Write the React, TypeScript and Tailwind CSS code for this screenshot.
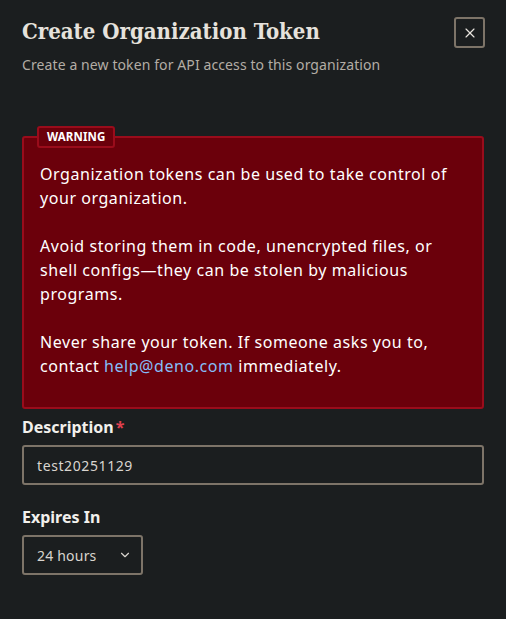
import { X, ChevronDown } from 'lucide-react';

export default function App() {
  return (
    <div className="min-h-screen w-full bg-[#1b1e1f] px-[22px] pt-[17px] text-[#f2f0ec] font-['Noto_Sans',sans-serif]">
      <div className="flex items-start justify-between">
        <div>
          <h1 className="font-['DejaVu_Serif_Condensed','DejaVu_Serif',serif] text-[22px] font-bold leading-[28px] text-[#e6e2dc]">
            Create Organization Token
          </h1>
          <p className="mt-[10px] text-[14px] leading-[20px] tracking-[0.1px] text-[#b3ada5]">
            Create a new token for API access to this organization
          </p>
        </div>
        <button className="mr-[-1px] flex h-[31px] w-[31px] items-center justify-center rounded-[3px] border-2 border-[#7d7468] text-[#e8e4de]">
          <X size={16} strokeWidth={1.75} />
        </button>
      </div>

      {/* Warnung */}
      <div className="relative mt-[61px] rounded-[3px] border-2 border-[#9a0c1b] bg-[#6b000b] px-[16px] pt-[24px] pb-[29px] text-[16px] leading-[24px] tracking-[0.55px] text-white">
        <span className="absolute left-[13px] top-[-12px] rounded-[3px] border-2 border-[#9a0c1b] bg-[#6b000b] px-[8px] text-[11.5px] font-bold leading-[18px] tracking-[0.1px]">
          WARNING
        </span>
        <p>Organization tokens can be used to take control of your organization.</p>
        <p className="mt-[24px]">
          Avoid storing them in code, unencrypted files, or shell configs—they can be stolen by malicious
          programs.
        </p>
        <p className="mt-[24px]">
          Never share your token. If someone asks you to, contact <a className="text-[#86bdf7]">help@deno.com</a>{' '}
          immediately.
        </p>
      </div>

      <label className="mt-[6px] flex text-[16px] font-bold leading-[24px] text-[#f2f0ec]">
        Description<span className="ml-[2px] text-[#e0404f]">*</span>
      </label>
      <div className="mt-[6px] flex h-[40px] items-center rounded-[3px] border-2 border-[#7d7468] px-[13px] text-[14px] tracking-[0.6px] text-[#d9d5cf]">
        test20251129
      </div>

      <label className="mt-[20px] block text-[16px] font-bold leading-[24px] text-[#f2f0ec]">Expires In</label>
      <div className="mt-[6px] flex h-[40px] w-[121px] items-center justify-between rounded-[3px] border-2 border-[#7d7468] pl-[13px] pr-[9px] text-[14px] tracking-[0.2px] text-[#d9d5cf]">
        <span>24 hours</span>
        <ChevronDown size={14} strokeWidth={2} />
      </div>
    </div>
  );
}
